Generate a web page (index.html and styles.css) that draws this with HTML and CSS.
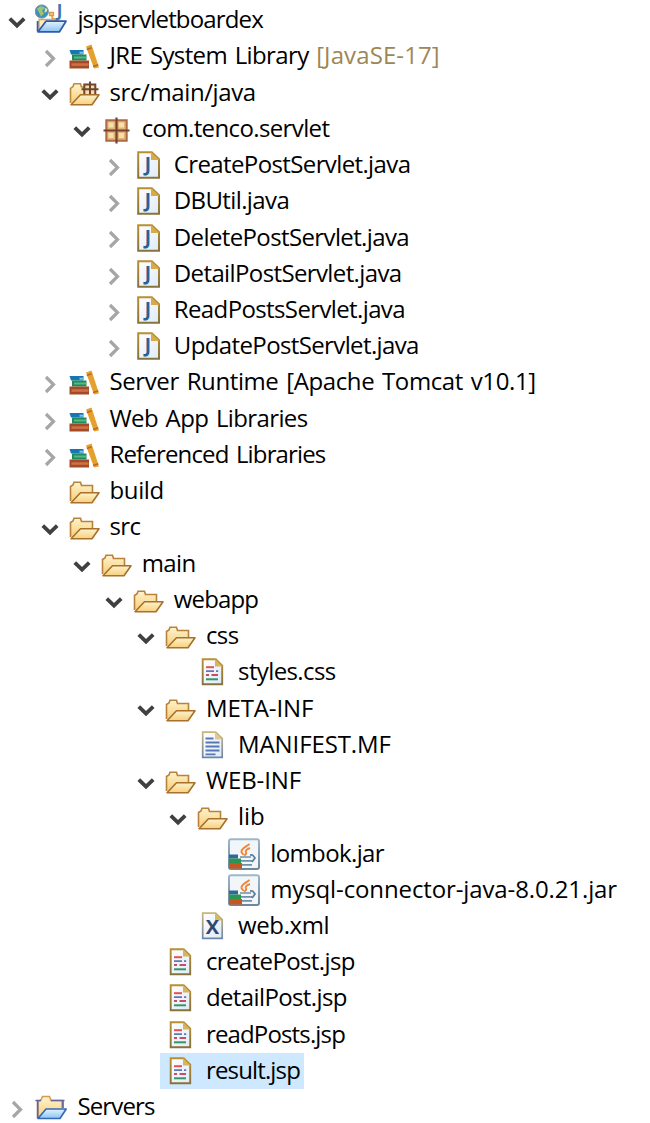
FILE: index.html
```html
<!DOCTYPE html>
<html lang="en">
<head>
    <meta charset="UTF-8">
    <meta name="viewport" content="width=device-width, initial-scale=1.0">
    <title>Project Explorer</title>
    <link rel="stylesheet" href="styles.css">
</head>
<body>
    <!-- Shared gradients, kept rendered so the fills resolve -->
    <svg class="gradients" xmlns="http://www.w3.org/2000/svg">
        <linearGradient id="gold" x1="0" y1="0" x2="0" y2="1">
            <stop offset="0" stop-color="#fff3cc"/><stop offset="1" stop-color="#f6cf7c"/>
        </linearGradient>
        <linearGradient id="sky" x1="0" y1="0" x2="0" y2="1">
            <stop offset="0" stop-color="#e2f4ff"/><stop offset="1" stop-color="#8cc3f2"/>
        </linearGradient>
        <linearGradient id="paper" x1="0" y1="0" x2="1" y2="1">
            <stop offset="0" stop-color="#ffffff"/><stop offset="1" stop-color="#dfeaf8"/>
        </linearGradient>
        <linearGradient id="edge" x1="0" y1="0" x2="0" y2="1">
            <stop offset="0" stop-color="#b8902f"/><stop offset="1" stop-color="#86733c"/>
        </linearGradient>
        <linearGradient id="edge-soft" x1="0" y1="0" x2="0" y2="1">
            <stop offset="0" stop-color="#c9b577"/><stop offset="1" stop-color="#6d86a8"/>
        </linearGradient>
        <linearGradient id="steel" x1="0" y1="0" x2="0" y2="1">
            <stop offset="0" stop-color="#9db8cc"/><stop offset="1" stop-color="#6d889c"/>
        </linearGradient>
    </svg>

    <!-- Icon sprite -->
    <svg class="sprite" xmlns="http://www.w3.org/2000/svg">
        <symbol id="open" viewBox="0 0 20 20">
            <path d="M2.800 6.600 10 13.600l7.200-7" fill="none" stroke="#404040" stroke-width="3.800"/>
        </symbol>
        <symbol id="closed" viewBox="0 0 20 20">
            <path d="M6 3l7.500 7.500L6 18" fill="none" stroke="#a6a6a6" stroke-width="3.200"/>
        </symbol>
        <symbol id="folder" viewBox="0 0 32 32">
            <path d="M2.500 26V11.500L5 10l1-2.800h6.500l1 3.300H24.500V17.500" fill="url(#gold)" stroke="#b9813a" stroke-width="1.600"/>
            <path d="M3 27.800 12.500 17.800H31L24 27.800z" fill="url(#gold)" stroke="#a8702a" stroke-width="1.600" stroke-linejoin="round"/>
        </symbol>
        <symbol id="source" viewBox="0 0 32 32">
            <path d="M2.500 26V11.500L5 9.500l1-2.800h6.500l1 3.300H26.500V17.500" fill="url(#gold)" stroke="#c08a3e" stroke-width="1.600"/>
            <path d="M16 7.500h11.500v9H16z" fill="#f3dfae"/>
            <path d="M3 27.800 12.500 17.800H31L24 27.800z" fill="url(#gold)" stroke="#a8702a" stroke-width="1.600" stroke-linejoin="round"/>
            <path d="M16.300 17V7.500h11V17M13.500 12.200h17M22 4.500V17" fill="none" stroke="#70442f" stroke-width="2"/>
        </symbol>
        <symbol id="books" viewBox="0 0 32 32">
            <path d="M1.500 10H15.500v4.500H3z" fill="#1676b4"/>
            <path d="M11.500 11.700h4v2h-4z" fill="#7fc4e6"/>
            <path d="M4 14.500h14.500v6H4z" fill="#218a5c"/>
            <path d="M6 16.500h12v2H6z" fill="#55b983"/>
            <path d="M1.500 20.500H21v8H1.500z" fill="#a34a28"/>
            <path d="M3.500 23.300h17v2.500h-17z" fill="#cf7145"/>
            <path d="M18 6.500 23.500 4.500 31 27.500 26 28.500z" fill="#e5a02e"/>
            <path d="M18.800 9.500l4.800-1.800M25 26.500l5.300-1.800" stroke="#b9682a" stroke-width="1.500"/>
        </symbol>
        <symbol id="project" viewBox="0 0 32 32">
            <path d="M4 27V15.500h11L24 17v1" fill="#ffeab8" stroke="#d5a955" stroke-width="1.300"/>
            <circle cx="6.800" cy="7.500" r="6.600" fill="#3d8fc0" stroke="#7797a4" stroke-width="1"/>
            <path d="M2 5c3-4 6-3 8-1L7 6.500l2 3-3 3-2-4z" fill="#9fc56c"/>
            <path d="M10 4l2.500 1-1 3-2 .5z" fill="#f0e38a"/>
            <path d="M14.500 8.500h4v3h-4zM17 12v3h4" fill="#f7d48f" stroke="#d79a45" stroke-width="1.300"/>
            <text x="24.500" y="13" class="tag">J</text>
            <path d="M2.600 17v10.500" stroke="#3b5ba5" stroke-width="1.800"/>
            <path d="M3 27.800 11 17.200H31L24.500 27.800z" fill="url(#sky)" stroke="#3159ab" stroke-width="1.700" stroke-linejoin="round"/>
        </symbol>
        <symbol id="servers" viewBox="0 0 32 32">
            <path d="M3 27V10.500L6 9l1.500-3.500h7L16 9.500h11V17" fill="url(#gold)" stroke="#d09b55" stroke-width="1.500"/>
            <path d="M.5 9.500H6M2.600 9v18.500M16 9.500h13.500M28 10v7" fill="none" stroke="#65649a" stroke-width="1.700"/>
            <path d="M3 27.500 11 18H31.200L25 27.500z" fill="url(#sky)" stroke="#3568b4" stroke-width="1.600" stroke-linejoin="round"/>
        </symbol>
        <symbol id="package" viewBox="0 0 32 32">
            <path d="M6.300 7.300h20.400v20.400H6.300z" fill="#dfb477" stroke="#ae6a42" stroke-width="2"/>
            <path d="M8.500 9.500h5v5h-5zM19 9.500h5v5h-5zM8.500 20h5v5h-5zM19 20h5v5h-5z" fill="#f5dfab"/>
            <path d="M16.500 4.500v26M3.500 17.500h26" stroke="#74422e" stroke-width="2.200"/>
        </symbol>
        <symbol id="java" viewBox="0 0 32 32">
            <path d="M6.200 3.200h13.600l7.200 7v18.600H6.200z" fill="url(#paper)" stroke="url(#edge)" stroke-width="2"/>
            <path d="M19 3v8h8.500z" fill="#d9aa49"/>
            <text x="16" y="22" class="glyph java-glyph">J</text>
        </symbol>
        <symbol id="markup" viewBox="0 0 32 32">
            <path d="M6.700 3.200h13l6.500 6.500v18.600H6.700z" fill="url(#paper)" stroke="url(#edge)" stroke-width="1.900"/>
            <path d="M19 3v7.500h7.500z" fill="#d7b45f"/>
            <path d="M10 11.200h8" stroke="#e55252" stroke-width="2"/>
            <path d="M10 15.200h8M20 15.200h2.200" stroke="#6276b3" stroke-width="1.800"/>
            <path d="M10 19h3M15.500 19h6.500" stroke="#c64c68" stroke-width="1.800"/>
            <path d="M10 23.300h12" stroke="#369565" stroke-width="2"/>
        </symbol>
        <symbol id="text" viewBox="0 0 32 32">
            <path d="M6.700 3.200h13l6.500 6.500v18.600H6.700z" fill="url(#paper)" stroke="url(#edge-soft)" stroke-width="1.700"/>
            <path d="M19 3v7.500h7.500z" fill="#dfc98f"/>
            <path d="M9.500 9.500h8M9.500 13.500h14M9.500 17.500h14M9.500 21.500h14M9.500 25.300h10" stroke="#5878b5" stroke-width="1.800"/>
        </symbol>
        <symbol id="xml" viewBox="0 0 32 32">
            <path d="M6.700 3.200h13l6.500 6.500v18.600H6.700z" fill="url(#paper)" stroke="url(#edge-soft)" stroke-width="1.700"/>
            <path d="M19 3v7.500h7.500z" fill="#d9b75e"/>
            <text x="16.300" y="24" class="glyph xml-glyph">X</text>
        </symbol>
        <symbol id="jar" viewBox="0 0 32 32">
            <rect x="1" y="1.200" width="30" height="29.800" rx="2" fill="#f3f6f9" stroke="url(#steel)" stroke-width="2"/>
            <path d="M21.500 6c-4 3-9 5-8 8 .4 1.500 2 1.500 1.500 3M22 10c-4 1.500-5 3-4 4.500.8 1.500-1 2.500-1.800 3" fill="none" stroke="#ee8638" stroke-width="1.900"/>
            <path d="M12 19h11M13 22.800h11M14 26.800h10" stroke="#6f90ab" stroke-width="1.700"/>
            <path d="M22 16.800l2.500.2 2.500 3-3 4" fill="none" stroke="#5d7f9e" stroke-width="1.800"/>
            <path d="M1 16.500h9v4H1z" fill="#2d699c"/>
            <path d="M1 20.500h12V25H1z" fill="#2b9653"/>
            <path d="M1 25h13v5.500H1z" fill="#c8571f"/>
        </symbol>
    </svg>

    <ul class="tree">
        <li>
            <div class="row"><svg class="arrow"><use href="#open"/></svg><span class="entry"><svg class="icon"><use href="#project"/></svg><span class="label tight">jspservletboardex</span></span></div>
            <ul>
                <li><div class="row"><svg class="arrow"><use href="#closed"/></svg><span class="entry"><svg class="icon"><use href="#books"/></svg><span class="label">JRE System Library <span class="note">[JavaSE-17]</span></span></span></div></li>
                <li>
                    <div class="row"><svg class="arrow"><use href="#open"/></svg><span class="entry"><svg class="icon"><use href="#source"/></svg><span class="label loose">src/main/java</span></span></div>
                    <ul>
                        <li>
                            <div class="row"><svg class="arrow"><use href="#open"/></svg><span class="entry"><svg class="icon"><use href="#package"/></svg><span class="label">com.tenco.servlet</span></span></div>
                            <ul>
                                <li><div class="row"><svg class="arrow"><use href="#closed"/></svg><span class="entry"><svg class="icon"><use href="#java"/></svg><span class="label">CreatePostServlet.java</span></span></div></li>
                                <li><div class="row"><svg class="arrow"><use href="#closed"/></svg><span class="entry"><svg class="icon"><use href="#java"/></svg><span class="label">DBUtil.java</span></span></div></li>
                                <li><div class="row"><svg class="arrow"><use href="#closed"/></svg><span class="entry"><svg class="icon"><use href="#java"/></svg><span class="label">DeletePostServlet.java</span></span></div></li>
                                <li><div class="row"><svg class="arrow"><use href="#closed"/></svg><span class="entry"><svg class="icon"><use href="#java"/></svg><span class="label">DetailPostServlet.java</span></span></div></li>
                                <li><div class="row"><svg class="arrow"><use href="#closed"/></svg><span class="entry"><svg class="icon"><use href="#java"/></svg><span class="label">ReadPostsServlet.java</span></span></div></li>
                                <li><div class="row"><svg class="arrow"><use href="#closed"/></svg><span class="entry"><svg class="icon"><use href="#java"/></svg><span class="label">UpdatePostServlet.java</span></span></div></li>
                            </ul>
                        </li>
                    </ul>
                </li>
                <li><div class="row"><svg class="arrow"><use href="#closed"/></svg><span class="entry"><svg class="icon"><use href="#books"/></svg><span class="label loose">Server Runtime [Apache Tomcat v10.1]</span></span></div></li>
                <li><div class="row"><svg class="arrow"><use href="#closed"/></svg><span class="entry"><svg class="icon"><use href="#books"/></svg><span class="label">Web App Libraries</span></span></div></li>
                <li><div class="row"><svg class="arrow"><use href="#closed"/></svg><span class="entry"><svg class="icon"><use href="#books"/></svg><span class="label tight">Referenced Libraries</span></span></div></li>
                <li><div class="row"><span class="arrow"></span><span class="entry"><svg class="icon"><use href="#folder"/></svg><span class="label loose">build</span></span></div></li>
                <li>
                    <div class="row"><svg class="arrow"><use href="#open"/></svg><span class="entry"><svg class="icon"><use href="#folder"/></svg><span class="label">src</span></span></div>
                    <ul>
                        <li>
                            <div class="row"><svg class="arrow"><use href="#open"/></svg><span class="entry"><svg class="icon"><use href="#folder"/></svg><span class="label">main</span></span></div>
                            <ul>
                                <li>
                                    <div class="row"><svg class="arrow"><use href="#open"/></svg><span class="entry"><svg class="icon"><use href="#folder"/></svg><span class="label tight">webapp</span></span></div>
                                    <ul>
                                        <li>
                                            <div class="row"><svg class="arrow"><use href="#open"/></svg><span class="entry"><svg class="icon"><use href="#folder"/></svg><span class="label">css</span></span></div>
                                            <ul>
                                                <li><div class="row"><span class="arrow"></span><span class="entry"><svg class="icon"><use href="#markup"/></svg><span class="label">styles.css</span></span></div></li>
                                            </ul>
                                        </li>
                                        <li>
                                            <div class="row"><svg class="arrow"><use href="#open"/></svg><span class="entry"><svg class="icon"><use href="#folder"/></svg><span class="label wide">META-INF</span></span></div>
                                            <ul>
                                                <li><div class="row"><span class="arrow"></span><span class="entry"><svg class="icon"><use href="#text"/></svg><span class="label wide">MANIFEST.MF</span></span></div></li>
                                            </ul>
                                        </li>
                                        <li>
                                            <div class="row"><svg class="arrow"><use href="#open"/></svg><span class="entry"><svg class="icon"><use href="#folder"/></svg><span class="label wide">WEB-INF</span></span></div>
                                            <ul>
                                                <li>
                                                    <div class="row"><svg class="arrow"><use href="#open"/></svg><span class="entry"><svg class="icon"><use href="#folder"/></svg><span class="label wide">lib</span></span></div>
                                                    <ul>
                                                        <li><div class="row"><span class="arrow"></span><span class="entry"><svg class="icon"><use href="#jar"/></svg><span class="label">lombok.jar</span></span></div></li>
                                                        <li><div class="row"><span class="arrow"></span><span class="entry"><svg class="icon"><use href="#jar"/></svg><span class="label wide">mysql-connector-java-8.0.21.jar</span></span></div></li>
                                                    </ul>
                                                </li>
                                                <li><div class="row"><span class="arrow"></span><span class="entry"><svg class="icon"><use href="#xml"/></svg><span class="label loose">web.xml</span></span></div></li>
                                            </ul>
                                        </li>
                                        <li><div class="row"><span class="arrow"></span><span class="entry"><svg class="icon"><use href="#markup"/></svg><span class="label">createPost.jsp</span></span></div></li>
                                        <li><div class="row"><span class="arrow"></span><span class="entry"><svg class="icon"><use href="#markup"/></svg><span class="label">detailPost.jsp</span></span></div></li>
                                        <li><div class="row"><span class="arrow"></span><span class="entry"><svg class="icon"><use href="#markup"/></svg><span class="label tight">readPosts.jsp</span></span></div></li>
                                        <li><div class="row"><span class="arrow"></span><span class="entry selected"><svg class="icon"><use href="#markup"/></svg><span class="label tight">result.jsp</span></span></div></li>
                                    </ul>
                                </li>
                            </ul>
                        </li>
                    </ul>
                </li>
            </ul>
        </li>
        <li><div class="row"><svg class="arrow"><use href="#closed"/></svg><span class="entry"><svg class="icon"><use href="#servers"/></svg><span class="label tight">Servers</span></span></div></li>
    </ul>
</body>
</html>
```
FILE: styles.css
```css
* {
    box-sizing: border-box;
    margin: 0;
    padding: 0;
}

body {
    font-family: "Open Sans", "Noto Sans", sans-serif;
    font-size: 24px;
    background-color: white;
    color: black;
    overflow: hidden;
}

.gradients {
    display: block;
    width: 0;
    height: 0;
}

.sprite {
    display: none;
}

.tree {
    padding: 2px 0 0 7.4px;
}

ul {
    list-style: none;
}

ul ul {
    padding-left: 32.15px;
}

.row {
    display: flex;
    height: 36.24px;
}

.arrow {
    width: 20px;
    height: 20px;
    flex: none;
    margin: 10px 4px 0 0;
}

.entry {
    display: flex;
    align-items: center;
    gap: 10px;
    padding: 0 4px;
}

.selected {
    background-color: #cde8ff;
}

.icon {
    width: 32px;
    height: 32px;
    flex: none;
}

.label {
    line-height: 34px;
    padding-bottom: 2px;
    white-space: nowrap;
    letter-spacing: -0.62px;
    word-spacing: 2px;
}

.tight {
    letter-spacing: -0.85px;
}

.loose {
    letter-spacing: -0.4px;
}

.wide {
    letter-spacing: -0.12px;
}

.note {
    color: #9d8755;
    letter-spacing: 0.1px;
}

.tag,
.glyph {
    font-family: "Open Sans", sans-serif;
    font-weight: bold;
    text-anchor: middle;
}

.tag {
    font-size: 17px;
    fill: #3d75ae;
}

.java-glyph {
    font-size: 19px;
    fill: #286295;
}

.xml-glyph {
    font-size: 20px;
    fill: #2f4a70;
}
```
